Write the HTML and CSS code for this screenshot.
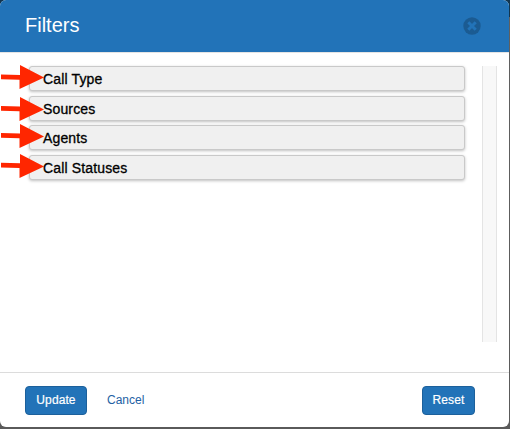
FILE: index.html
```html
<!DOCTYPE html>
<html lang="en">
<head>
    <meta charset="UTF-8">
    <title>Filters</title>
    <link rel="stylesheet" href="styles.css">
</head>
<body>
    <div class="modal">
        <div class="modal-header">
            <h1 class="modal-title">Filters</h1>
            <svg class="close" width="18" height="18" viewBox="0 0 18 18">
                <circle cx="9" cy="9" r="8.7" fill="#1b5b92"/>
                <path d="M5.3 5.3l7.4 7.4M12.7 5.3l-7.4 7.4" stroke="#2273b8" stroke-width="3"/>
            </svg>
        </div>

        <div class="modal-body">
            <div class="filters">
                <div class="filter">
                    <svg class="arrow arrow-high" width="46" height="26" viewBox="0 0 46 26"><path d="M1 9.5L20 10.1V0L44 12.4L19.5 24V14.8L1 14.2z"/></svg>
                    <span class="filter-name">Call Type</span>
                </div>
                <div class="filter">
                    <svg class="arrow arrow-low" width="46" height="26" viewBox="0 0 46 26"><path d="M1 9L20 9.6V0L44 12.4L19.5 24V14.3L1 13.7z"/></svg>
                    <span class="filter-name">Sources</span>
                </div>
                <div class="filter">
                    <svg class="arrow arrow-high" width="46" height="26" viewBox="0 0 46 26"><path d="M1 9L20 9.6V0L44 12.4L19.5 24V14.3L1 13.7z"/></svg>
                    <span class="filter-name">Agents</span>
                </div>
                <div class="filter">
                    <svg class="arrow arrow-high" width="46" height="26" viewBox="0 0 46 26"><path d="M1 8.7L20 9.3V0L44 12.4L19.5 24V14L1 13.4z"/></svg>
                    <span class="filter-name">Call Statuses</span>
                </div>
            </div>
            <div class="scroll-track"></div>
        </div>

        <div class="modal-footer">
            <button class="btn btn-update">Update</button>
            <a class="cancel">Cancel</a>
            <button class="btn btn-reset">Reset</button>
        </div>
    </div>
</body>
</html>
```
FILE: styles.css
```css
* {
    box-sizing: border-box;
}

body {
    margin: 0;
    height: 429px;
    background: linear-gradient(#12354f 0, #12354f 17px, #606060 17px, #5a5a5a 100%);
    font-family: "Liberation Sans", Arial, sans-serif;
    overflow: hidden;
}

.modal {
    display: flex;
    flex-direction: column;
    width: 509px;
    height: 427px;
    background: #fff;
    border-radius: 6px;
    overflow: hidden;
}

.modal-header {
    display: flex;
    justify-content: space-between;
    align-items: center;
    height: 52px;
    padding: 0 28px 0 25px;
    background: #2273b8;
}

.modal-title {
    margin: 0;
    padding-bottom: 3px;
    color: #fff;
    font-size: 20px;
    font-weight: normal;
    line-height: 24px;
}

.modal-body {
    display: flex;
    justify-content: space-between;
    height: 320px;
    padding: 13px 12px 30px 29px;
    border-top: 1px solid #e4e4e4;
}

.filters {
    display: flex;
    flex-direction: column;
    gap: 4.7px;
    width: 436px;
}

.filter {
    position: relative;
    display: flex;
    align-items: center;
    height: 25px;
    padding: 2px 0 0 13px;
    background: #f0f0f0;
    border: 1px solid #c9c9c9;
    border-radius: 3px;
    box-shadow: 0 1px 3px rgba(0, 0, 0, 0.25);
}

.filter-name {
    position: relative;
    color: #000;
    font-size: 14px;
    letter-spacing: 0.15px;
    line-height: 17px;
    -webkit-text-stroke: 0.3px #000;
}

/* arrows point in from the left edge of the dialog */
.arrow {
    position: absolute;
    left: -30px;
    top: -1px;
    fill: #ff2600;
}

.arrow-high {
    top: -2px;
}

.arrow-low {
    top: 0;
}

.scroll-track {
    width: 15px;
    background: #f8f8f8;
    border: solid #e4e4e4;
    border-width: 0 1px;
}

.modal-footer {
    display: flex;
    flex: 1;
    align-items: flex-start;
    padding: 13px 34px 0 25px;
    border-top: 1px solid #dcdcdc;
}

.btn {
    height: 29px;
    padding: 0 0 1px;
    color: #fff;
    background: #2273b8;
    border: 1px solid #1c609b;
    border-radius: 4px;
    font-family: inherit;
    font-size: 12px;
    letter-spacing: 0.1px;
    -webkit-text-stroke: 0.2px #fff;
}

.btn-update {
    width: 62px;
}

.btn-reset {
    width: 53px;
    margin-left: auto;
}

.cancel {
    margin-left: 20px;
    color: #2462a4;
    font-size: 12px;
    line-height: 28px;
}
```
